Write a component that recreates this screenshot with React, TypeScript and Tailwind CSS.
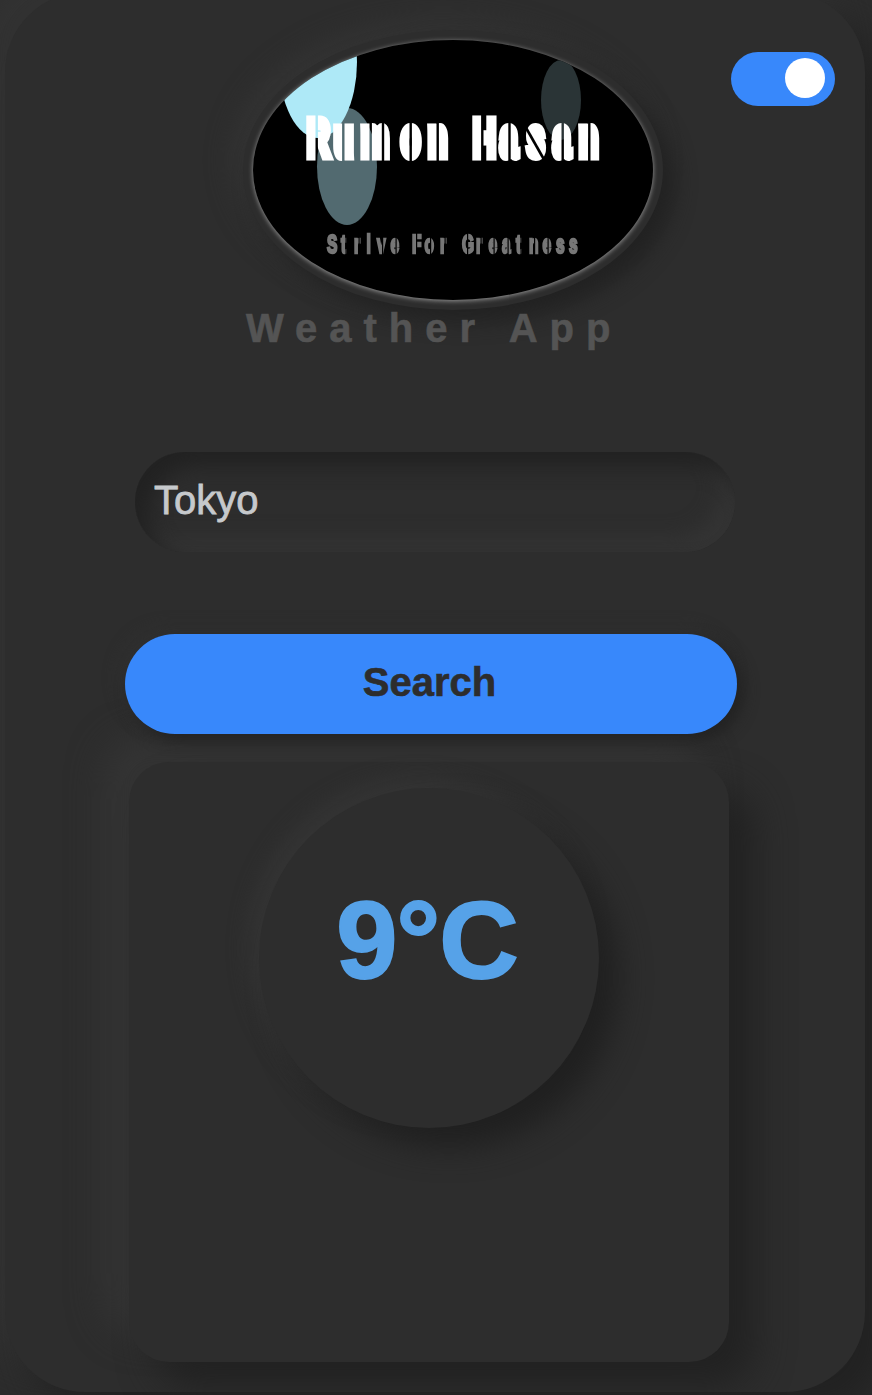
import { useState } from "react";

const NAME_X = [307, 334, 361, 401, 428, 452, 473, 500, 527, 553, 579];
const NAME_SLITS = [316.7, 343.3, 370.7, 383, 410.7, 437.7, 482.3, 509.5, 562.7, 589.3];
const MOTTO_X = [
  327, 341, 354, 366.5, 377, 390.5, 402, 412, 424.5, 440, 450, 462, 476, 488.5, 502, 516, 529, 542.5, 556, 569,
];
const MOTTO_SLITS = [346, 359, 382.5, 396, 416.5, 430.5, 445, 467.5, 481, 494, 508, 521, 534.5, 548];
const SQUEEZE = 0.62;

const stretch = (xs: number[]) => xs.map((x) => ((x - 253) / SQUEEZE).toFixed(1)).join(" ");

function Logo() {
  return (
    <div className="ml-[238px] h-[280px] w-[420px] shrink-0 rounded-[50%] bg-[#2d2d2d] p-[10px] shadow-[12px_12px_20px_#222222,-10px_-10px_26px_#343434]">
      <div className="h-[260px] w-[400px] overflow-hidden rounded-[50%] bg-black shadow-[0_1px_5px_#999999]">
        <svg viewBox="0 0 400 260" className="block h-full w-full">
          <defs>
            <mask id="name-slits" maskUnits="userSpaceOnUse" x="0" y="0" width="650" height="260">
              <rect width="650" height="260" fill="white" />
              {NAME_SLITS.map((x) => (
                <rect key={x} x={x - 254.2} y="70" width="2.4" height="60" fill="black" />
              ))}
              <path d="M272 86L293 123" stroke="black" strokeWidth="2.6" />
            </mask>
            <mask id="motto-slits" maskUnits="userSpaceOnUse" x="0" y="0" width="650" height="260">
              <rect width="650" height="260" fill="white" />
              {MOTTO_SLITS.map((x) => (
                <rect key={x} x={x - 253.5} y="185" width="1.2" height="40" fill="black" />
              ))}
            </mask>
          </defs>
          <ellipse cx="94" cy="126.5" rx="30" ry="58.5" fill="#526a70" />
          <ellipse cx="65" cy="22" rx="39" ry="76" fill="#aee9f7" />
          <ellipse cx="308" cy="60" rx="20" ry="40" fill="#2a3436" />
          <g mask="url(#name-slits)">
            <text
              transform="scale(0.62 1)"
              x={stretch(NAME_X)}
              y="116.5"
              fill="white"
              stroke="white"
              strokeWidth="9"
              className="font-['Liberation_Sans',sans-serif] text-[51px] font-bold"
            >
              Rumon Hasan
            </text>
          </g>
          <g mask="url(#motto-slits)">
            <text
              transform="scale(0.62 1)"
              x={stretch(MOTTO_X)}
              y="213"
              fill="#777777"
              stroke="#777777"
              strokeWidth="2.5"
              className="font-['Liberation_Sans',sans-serif] text-[25px] font-bold"
            >
              Strive For Greatness
            </text>
          </g>
        </svg>
      </div>
    </div>
  );
}

function Toggle() {
  const [on, setOn] = useState(true);
  return (
    <button
      role="switch"
      aria-checked={on}
      onClick={() => setOn(!on)}
      className={
        "mt-[22px] ml-[68px] flex h-[54px] w-[104px] shrink-0 rounded-full bg-[#3888fb] px-[10px] pt-[6px] " +
        (on ? "justify-end" : "justify-start")
      }
    >
      <span className="size-10 rounded-full bg-white" />
    </button>
  );
}

export default function App() {
  const [city, setCity] = useState("Tokyo");
  return (
    <div className="flex h-[1395px] w-[872px] overflow-hidden bg-[#2d2d2d] font-['Liberation_Sans',Arial,sans-serif]">
      <main className="-mt-2 ml-[5px] flex h-[1400px] w-[860px] shrink-0 flex-col items-start rounded-[80px] bg-[#2d2d2d] pt-[38px] shadow-[28px_28px_40px_#222222,-28px_-28px_40px_#333333]">
        <header className="flex items-start">
          <Logo />
          <Toggle />
        </header>
        <h1 className="-mt-[2px] ml-[241px] text-[40px] leading-none font-bold tracking-[12px] whitespace-nowrap text-[#545454] [-webkit-text-stroke:0.6px_#545454]">
          Weather App
        </h1>
        <input
          value={city}
          onChange={(e) => setCity(e.target.value)}
          className="mt-[104px] ml-[130px] h-[100px] w-[600px] rounded-full bg-[#2d2d2d] pb-1 pl-[19px] text-[40px] text-[#c6c9cc] [-webkit-text-stroke:0.8px_#c6c9cc] shadow-[inset_14px_14px_20px_#222222,inset_-14px_-14px_20px_#343434] outline-none"
        />
        <button className="relative z-10 mt-[82px] ml-[120px] h-[100px] w-[612px] rounded-full bg-[#3888fb] pr-[3px] pb-1 text-[40px] leading-none font-bold text-[#2d2d2d] [-webkit-text-stroke:0.6px_#2d2d2d] shadow-[6px_6px_15px_#222222,-6px_-6px_15px_#313131]">
          Search
        </button>
        <section className="mt-7 ml-[124px] flex h-[600px] w-[600px] flex-col rounded-[40px] bg-[#2d2d2d] pt-[26px] pl-[130px] shadow-[26px_26px_36px_#222222,-26px_-26px_34px_#343434]">
          <div className="flex size-[340px] justify-center rounded-full bg-[#2d2d2d] pt-24 pr-1 shadow-[20px_20px_30px_#202020,-10px_-10px_20px_#353535]">
            <p className="text-[110px] leading-[112px] font-bold tracking-[-1px] text-[#56a2e8] [-webkit-text-stroke:2px_#56a2e8]">
              9°C
            </p>
          </div>
        </section>
      </main>
    </div>
  );
}
